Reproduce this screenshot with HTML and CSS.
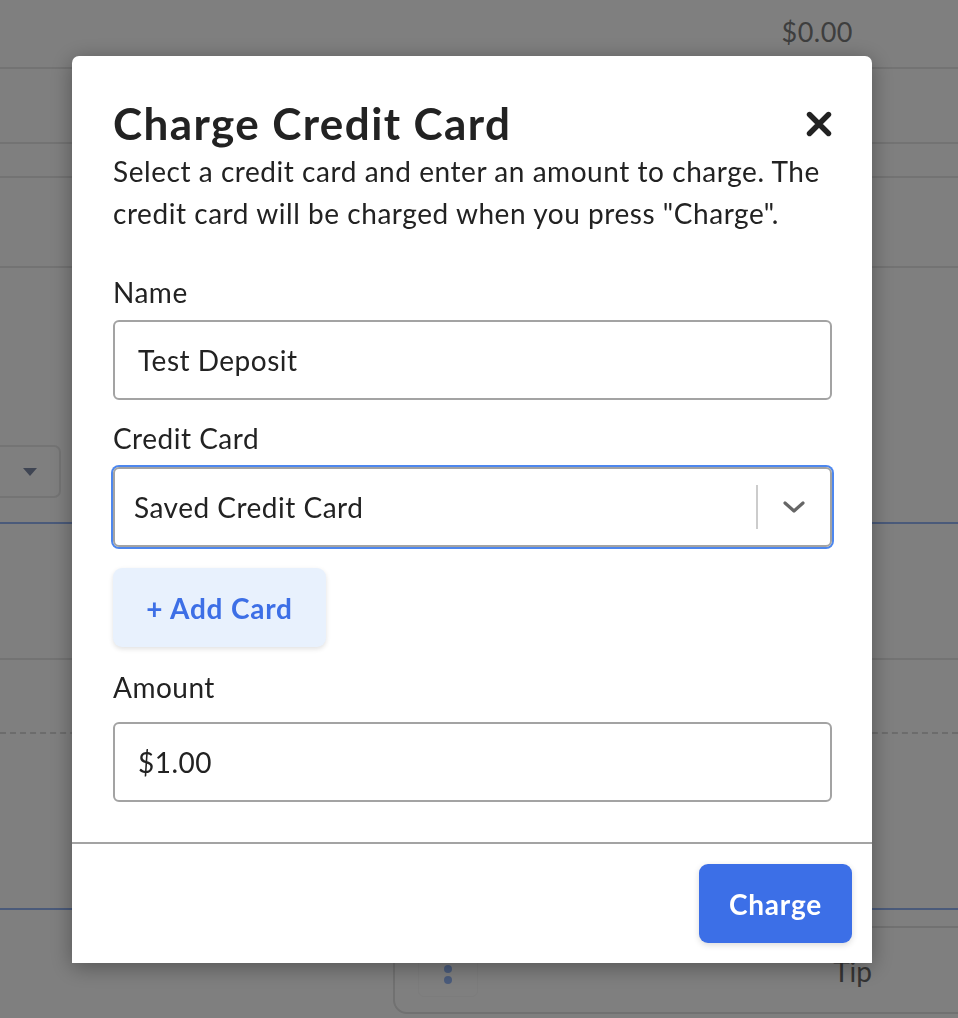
FILE: index.html
```html
<!DOCTYPE html>
<html lang="en">
<head>
<meta charset="utf-8">
<title>Charge Credit Card</title>
<link rel="stylesheet" href="styles.css">
</head>
<body>
<div class="page">
  <div class="row row-total"><span class="total">$0.00</span></div>
  <div class="row row-b"></div>
  <div class="row row-c"></div>
  <div class="row row-d"></div>
  <div class="row row-select">
    <div class="bg-select"><span class="bg-caret"></span></div>
  </div>
  <div class="row row-blue1"></div>
  <div class="row row-gray"></div>
  <div class="row row-dashed"></div>
  <div class="row-tip">
    <div class="tip-card">
      <div class="tip-handle"><span class="dot"></span><span class="dot"></span><span class="dot"></span></div>
      <span class="tip-label">Tip</span>
    </div>
  </div>
</div>

<div class="overlay"></div>

<div class="modal" role="dialog" aria-labelledby="modal-title">
  <div class="modal-body">
    <div class="modal-head">
      <h1 id="modal-title" class="modal-title">Charge Credit Card</h1>
      <button class="close" aria-label="Close">
        <svg width="26" height="26" viewBox="0 0 26 26"><path d="M3.5 3.5 L22.5 22.5 M22.5 3.5 L3.5 22.5" stroke="#222" stroke-width="5.4" stroke-linecap="round"/></svg>
      </button>
    </div>
    <p class="desc">Select a credit card and enter an amount to charge. The credit card will be charged when you press "Charge".</p>

    <div class="field field-name">
      <label class="label">Name</label>
      <div class="input">Test Deposit</div>
    </div>

    <div class="field field-card">
      <label class="label">Credit Card</label>
      <div class="input select">
        <span class="select-value">Saved Credit Card</span>
        <span class="select-sep"></span>
        <span class="select-arrow">
          <svg width="24" height="16" viewBox="0 0 24 16"><path d="M3 4 L12 12 L21 4" fill="none" stroke="#666" stroke-width="3.2" stroke-linecap="round" stroke-linejoin="round"/></svg>
        </span>
      </div>
    </div>

    <button class="add-card">+ Add Card</button>

    <div class="field field-amount">
      <label class="label">Amount</label>
      <div class="input">$1.00</div>
    </div>
  </div>
  <div class="modal-foot">
    <button class="charge">Charge</button>
  </div>
</div>
</body>
</html>
```

FILE: styles.css
```css
* { box-sizing: border-box; }

html, body {
  margin: 0;
  padding: 0;
  background: #ffffff;
  font-family: "Lato", "Noto Sans", sans-serif;
  overflow: hidden;
}

/* ---------- background page ---------- */
.page {
  display: flex;
  flex-direction: column;
  width: 958px;
  height: 1018px;
  overflow: hidden;
}
.row { border-bottom: 2px solid #e6e6e6; }
.row-total {
  height: 69px;
  display: flex;
  align-items: center;
  justify-content: flex-end;
  padding-right: 105px;
  padding-bottom: 4px;
}
.total {
  font-size: 27px;
  letter-spacing: 0.5px;
  color: #7c7c7c;
}
.row-b { height: 75px; }
.row-c { height: 34px; }
.row-d { height: 90px; }
.row-select {
  height: 256px;
  border-bottom: 2px solid #94b4f4;
  padding-top: 177px;
}
.bg-select {
  width: 71px;
  height: 53px;
  margin-left: -10px;
  border: 2px solid #e8e8e8;
  border-radius: 7px;
  display: flex;
  align-items: center;
  justify-content: flex-end;
  padding-right: 22px;
}
.bg-caret {
  width: 0;
  height: 0;
  border-left: 7px solid transparent;
  border-right: 7px solid transparent;
  border-top: 8px solid #7f8aa6;
}
.row-blue1 { height: 136px; }
.row-gray { height: 74px; border-bottom: 2px dashed #d8d8d8; }
.row-dashed { height: 176px; border-bottom: 2px solid #94b4f4; }
.row-tip {
  padding: 16px 0 0 393px;
  width: 1100px;
}
.tip-card {
  width: 600px;
  height: 88px;
  border: 2px solid #e2e2e2;
  border-radius: 14px;
  display: flex;
  align-items: center;
  padding: 0 119px 0 23px;
}
.tip-handle {
  width: 60px;
  height: 56px;
  margin-top: -2px;
  border: 1px solid #f8f8f8;
  border-radius: 6px;
  display: flex;
  flex-direction: column;
  align-items: center;
  justify-content: center;
  gap: 3px;
}
.dot { width: 8px; height: 8px; border-radius: 50%; background: #96b8f8; }
.tip-label {
  margin-left: auto;
  font-size: 28px;
  color: #6a6a6a;
  margin-top: 2px;
}

/* ---------- overlay ---------- */
.overlay {
  position: fixed;
  inset: 0;
  background: rgba(0, 0, 0, 0.5);
}

/* ---------- modal ---------- */
.modal {
  position: fixed;
  top: 56px;
  left: 72px;
  width: 800px;
  background: #ffffff;
  border-radius: 7px 7px 0 0;
  box-shadow: 0 4px 22px rgba(0, 0, 0, 0.35);
  color: #222;
}
.modal-body {
  padding: 40px 40px 40px 41px;
}
.modal-head {
  display: flex;
  align-items: center;
  justify-content: space-between;
}
.modal-title {
  margin: 0;
  font-size: 44px;
  font-weight: 700;
  letter-spacing: 1.4px;
  line-height: 54px;
  color: #222;
}
.close {
  background: none;
  border: none;
  padding: 0;
  width: 26px;
  height: 26px;
  margin-top: 2px;
}
.close svg { display: block; }
.desc {
  margin: 0 0 41px;
  font-size: 28px;
  letter-spacing: 0.55px;
  line-height: 42px;
}
.field { display: flex; flex-direction: column; }
.label {
  font-size: 28px;
  letter-spacing: 0.5px;
  line-height: 34px;
  margin-bottom: 12px;
}
.field-name { margin-bottom: 21px; }
.field-name .label { margin-bottom: 11px; }
.field-amount { margin-top: 23px; }
.field-amount .label { margin-bottom: 18px; }
.input {
  height: 80px;
  border: 2px solid #a3a3a3;
  border-radius: 6px;
  display: flex;
  align-items: center;
  padding-left: 23px;
  font-size: 28px;
  letter-spacing: 0.5px;
}
.select {
  box-shadow: 0 0 0 2px #4d87ee;
  padding-left: 19px;
  padding-right: 0;
}
.select-value { flex: 1; }
.select-sep {
  width: 2px;
  height: 44px;
  background: #cccccc;
}
.select-arrow {
  width: 72px;
  display: flex;
  align-items: center;
  justify-content: center;
}
.select-arrow svg { display: block; }
.add-card {
  display: block;
  width: 213px;
  height: 79px;
  margin-top: 21px;
  border: none;
  border-radius: 9px;
  background: #e8f1fd;
  color: #3d6fe6;
  font-family: inherit;
  font-size: 28px;
  font-weight: 700;
  letter-spacing: 0.8px;
  box-shadow: 0 2px 5px rgba(0, 0, 0, 0.12);
}
.modal-foot {
  border-top: 2px solid #a3a3a3;
  padding: 20px;
  display: flex;
  justify-content: flex-end;
}
.charge {
  width: 153px;
  height: 79px;
  border: none;
  border-radius: 9px;
  background: #3c6fe7;
  color: #fff;
  font-family: inherit;
  font-size: 28px;
  font-weight: 700;
  letter-spacing: 0.8px;
  box-shadow: 0 2px 6px rgba(0, 0, 0, 0.15);
}
```
